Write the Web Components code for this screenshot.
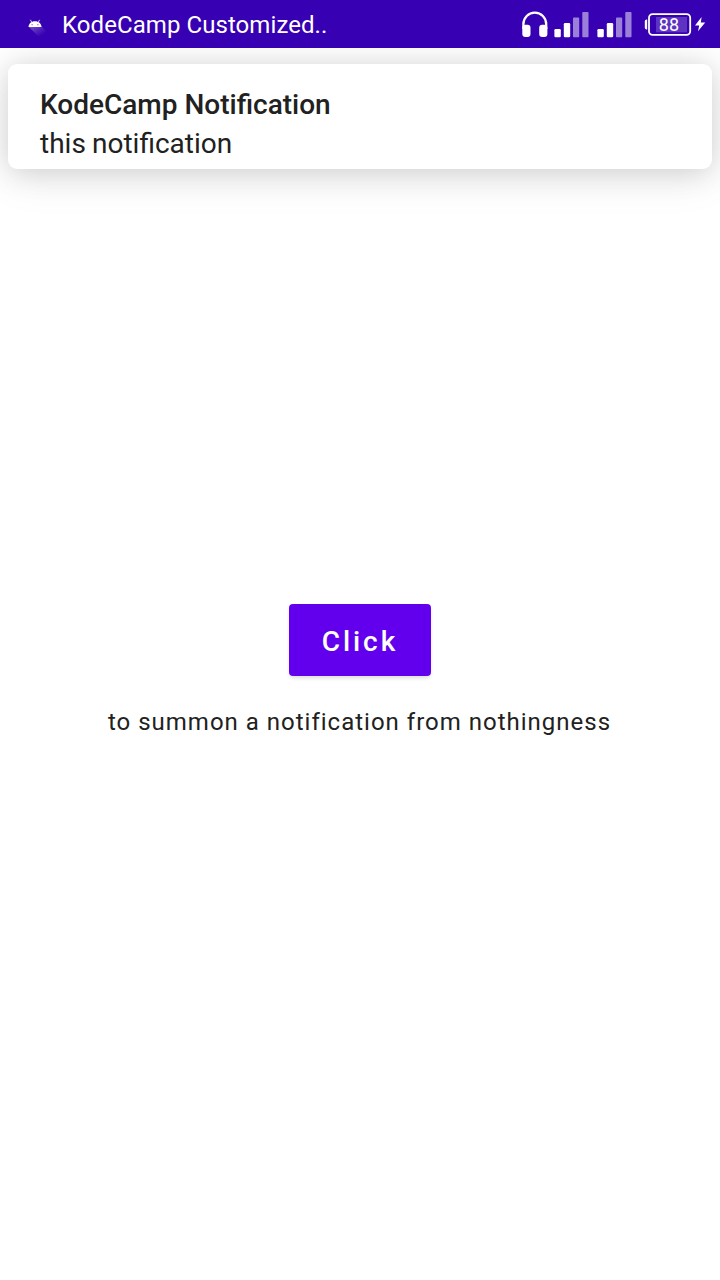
<!DOCTYPE html>
<html lang="en">
<head>
<meta charset="utf-8">
<title>KodeCamp Customized Notification</title>
<style>
html, body { margin: 0; background: #fff; }
body { font-family: Roboto, "Noto Sans", sans-serif; color: #212121; overflow: hidden; }
</style>
</head>
<body>
<phone-screen>
  <status-bar slot="status">
    <span>KodeCamp Customized..</span>
    <status-icons slot="icons" level="88"></status-icons>
  </status-bar>
  <heads-up-card slot="notice">
    <span slot="title">KodeCamp Notification</span>
    <span>this notification</span>
  </heads-up-card>
  <raised-button>Click</raised-button>
  <hint-text>to summon a notification from nothingness</hint-text>
</phone-screen>
<script>
const define = (name, html, setup) => {
  const template = document.createElement('template');
  template.innerHTML = html;
  customElements.define(name, class extends HTMLElement {
    constructor() {
      super();
      this.attachShadow({ mode: 'open' }).append(template.content.cloneNode(true));
    }
    connectedCallback() { if (setup) setup(this); }
  });
};

define('phone-screen', `
<style>
:host { display: grid; grid-template-rows: 48px 121px 1fr; width: 720px; height: 1280px; overflow: hidden; background: #fff; }
.bar { z-index: 2; }
.notice { padding: 16px 8px 0; display: grid; }
main { display: flex; flex-direction: column; align-items: center; padding-top: 435px; gap: 29px; }
</style>
<div class="bar"><slot name="status"></slot></div>
<div class="notice"><slot name="notice"></slot></div>
<main><slot></slot></main>`);

define('status-bar', `
<style>
:host { display: flex; align-items: center; height: 48px; background: #3700b3; color: #fff; font-size: 24px; line-height: 28px; }
.app { flex: none; width: 38px; height: 48px; margin-left: 24px; }
.label { flex: 1; white-space: nowrap; padding-top: 2px; letter-spacing: .07px; }
</style>
<svg class="app" viewBox="24 0 38 48">
  <defs><linearGradient id="fade" x1="33" y1="25" x2="41" y2="36" gradientUnits="userSpaceOnUse">
    <stop offset="0" stop-color="#fff" stop-opacity=".3"/><stop offset="1" stop-color="#fff" stop-opacity="0"/></linearGradient></defs>
  <path d="M28.6 26.8L38 36h9.5V32.5L41.3 26z" fill="url(#fade)"/>
  <path d="M28.5 27C28.7 23.6 31.2 21.2 35 21.2S41.3 23.6 41.5 27z" fill="#fff"/>
  <path d="M31.8 22.3L30.4 19.8M38.2 22.3L39.6 19.8" stroke="#fff" stroke-width=".8"/>
  <circle cx="32.1" cy="24.7" r=".6" fill="#3700b3" opacity=".7"/><circle cx="37.9" cy="24.7" r=".6" fill="#3700b3" opacity=".7"/>
</svg>
<div class="label"><slot></slot></div>
<slot name="icons"></slot>`);

define('status-icons', `
<style>
:host { display: block; width: 200px; height: 48px; }
svg { display: block; }
text { font: 18px Roboto, sans-serif; fill: #fff; }
</style>
<svg width="200" height="48" viewBox="520 0 200 48" fill="#fff">
  <path d="M523.4 29V24A11.4 11.4 0 0 1 546.2 24V29" fill="none" stroke="#fff" stroke-width="2.3"/>
  <rect x="522.3" y="24.7" width="8.2" height="12.3" rx="3"/>
  <rect x="539.2" y="24.7" width="8.2" height="12.3" rx="3"/>
  <g id="sim">
    <rect x="554.4" y="29" width="6.4" height="8.3" rx="1.2"/>
    <rect x="563.8" y="23" width="6.4" height="14.3" rx="1.2"/>
    <rect x="573" y="17.6" width="6.2" height="19.7" rx=".8" opacity=".5"/>
    <rect x="582.3" y="12" width="6.2" height="25.3" rx=".8" opacity=".5"/>
  </g>
  <use href="#sim" x="43"/>
  <path d="M647.2 19.5v10h-.6q-1.8 0-1.8-2v-6q0-2 1.8-2z"/>
  <rect x="649" y="14.1" width="41.2" height="20.8" rx="3.6" fill="none" stroke="#fff" stroke-width="1.8"/>
  <rect x="656" y="17" width="31" height="15.3" opacity=".2"/>
  <text x="658.8" y="31.2"></text>
  <path d="M701.6 17L695 25.6h4.2L698 31.3l7.2-8.7h-4.4z"/>
</svg>`, el => {
  el.shadowRoot.querySelector('text').textContent = el.getAttribute('level');
});

define('heads-up-card', `
<style>
:host { display: block; box-sizing: border-box; height: 105px; border-radius: 9px; background: #fff; padding: 21px 32px 0;
  font-size: 28px; line-height: 39px; box-shadow: 0 18px 38px rgba(0,0,0,.05), 0 1px 30px rgba(0,0,0,.17); white-space: nowrap; }
.title { font-weight: 500; }
.text { word-spacing: -.8px; }
</style>
<div class="title"><slot name="title"></slot></div>
<div class="text"><slot></slot></div>`);

define('raised-button', `
<style>
:host { display: block; }
button { display: block; width: 142px; height: 72px; margin: 0; padding: 3px 0 0; border: 0; border-radius: 4px; background: #6200ee; color: #fff;
  font: 500 28px/33px Roboto, sans-serif; letter-spacing: 2.9px; box-shadow: 0 3px 4px -1px rgba(0,0,0,.14); }
</style>
<button><slot></slot></button>`);

define('hint-text', `
<style>
:host { display: block; font-size: 24px; line-height: 34px; letter-spacing: 1px; white-space: nowrap; margin-right: 1px; }
</style>
<slot></slot>`);
</script>
</body>
</html>
